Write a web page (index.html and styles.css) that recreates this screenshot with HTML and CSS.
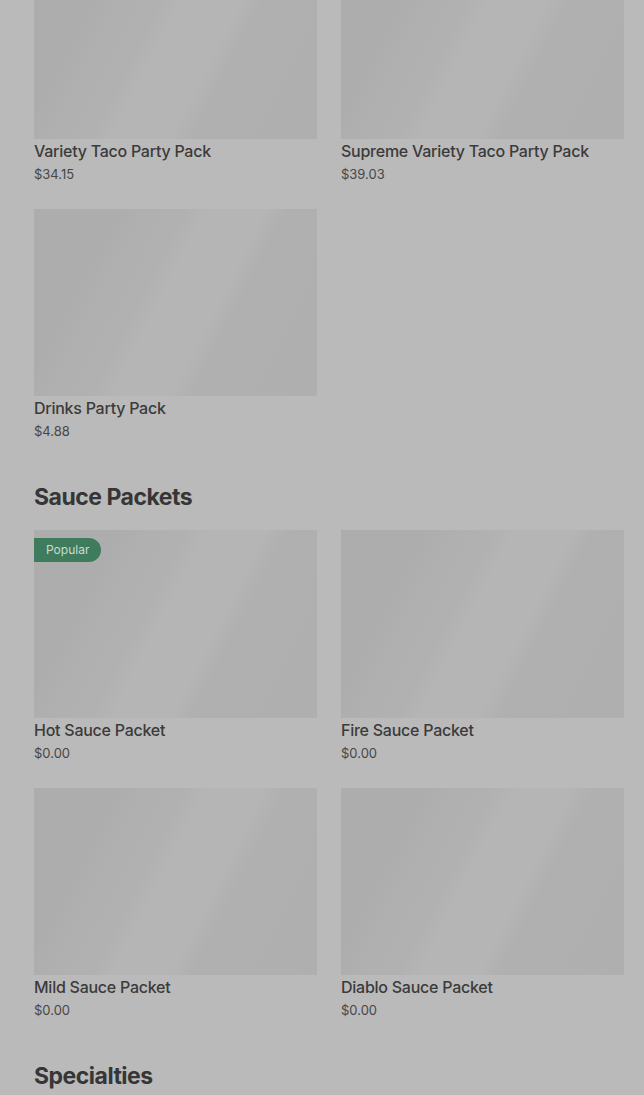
FILE: index.html
```html
<!DOCTYPE html>
<html lang="en">
<head>
<meta charset="utf-8">
<title>Menu</title>
<link rel="stylesheet" href="styles.css">
</head>
<body>
<main class="menu">
  <section class="section section-first">
    <div class="grid">
      <article class="card">
        <div class="thumb"></div>
        <h3 class="name">Variety Taco Party Pack</h3>
        <p class="price">$34.15</p>
      </article>
      <article class="card">
        <div class="thumb"></div>
        <h3 class="name">Supreme Variety Taco Party Pack</h3>
        <p class="price">$39.03</p>
      </article>
      <article class="card">
        <div class="thumb"></div>
        <h3 class="name">Drinks Party Pack</h3>
        <p class="price">$4.88</p>
      </article>
    </div>
  </section>

  <section class="section">
    <h2 class="section-title">Sauce Packets</h2>
    <div class="grid">
      <article class="card">
        <div class="thumb"><span class="badge">Popular</span></div>
        <h3 class="name">Hot Sauce Packet</h3>
        <p class="price">$0.00</p>
      </article>
      <article class="card">
        <div class="thumb"></div>
        <h3 class="name">Fire Sauce Packet</h3>
        <p class="price">$0.00</p>
      </article>
      <article class="card">
        <div class="thumb"></div>
        <h3 class="name">Mild Sauce Packet</h3>
        <p class="price">$0.00</p>
      </article>
      <article class="card">
        <div class="thumb"></div>
        <h3 class="name">Diablo Sauce Packet</h3>
        <p class="price">$0.00</p>
      </article>
    </div>
  </section>

  <section class="section">
    <h2 class="section-title">Specialties</h2>
  </section>
</main>
</body>
</html>
```

FILE: styles.css
```css
html, body {
  margin: 0;
  padding: 0;
  background: #bababa;
  overflow: hidden;
}

body {
  font-family: Inter, "Noto Sans", "Liberation Sans", sans-serif;
  color: #3b3b3b;
}

.menu {
  padding: 0 20px 0 34px;
}

.section {
  padding-top: 39px;
}

.section-first {
  padding-top: 0;
  margin-top: -49px;
}

.section-title {
  margin: 0 0 17px;
  font-size: 23px;
  line-height: 32px;
  font-weight: 700;
  letter-spacing: -0.5px;
  color: #363636;
}

.grid {
  display: grid;
  grid-template-columns: 1fr 1fr;
  column-gap: 24px;
  row-gap: 24px;
}

.card {
  margin: 0;
}

.thumb {
  position: relative;
  height: 187.5px;
  background: linear-gradient(117deg, #adadad 0%, #adadad 22%, #b0b0b0 30%, #b1b1b1 40%, #b5b5b5 46%, #b5b5b5 61%, #b0b0b0 67%, #afafaf 100%);
}

.badge {
  position: absolute;
  top: 8px;
  left: 0;
  height: 24px;
  padding: 0 12px;
  border-radius: 0 12px 12px 0;
  background: #3f7c5d;
  color: #c9dccf;
  font-size: 12px;
  line-height: 24px;
}

.name {
  margin: 0;
  font-size: 16px;
  line-height: 24px;
  font-weight: 500;
  letter-spacing: -0.25px;
  color: #3b3b3b;
}

.price {
  margin: 0;
  font-size: 13px;
  line-height: 22px;
  font-weight: 400;
  color: #474747;
}
```
